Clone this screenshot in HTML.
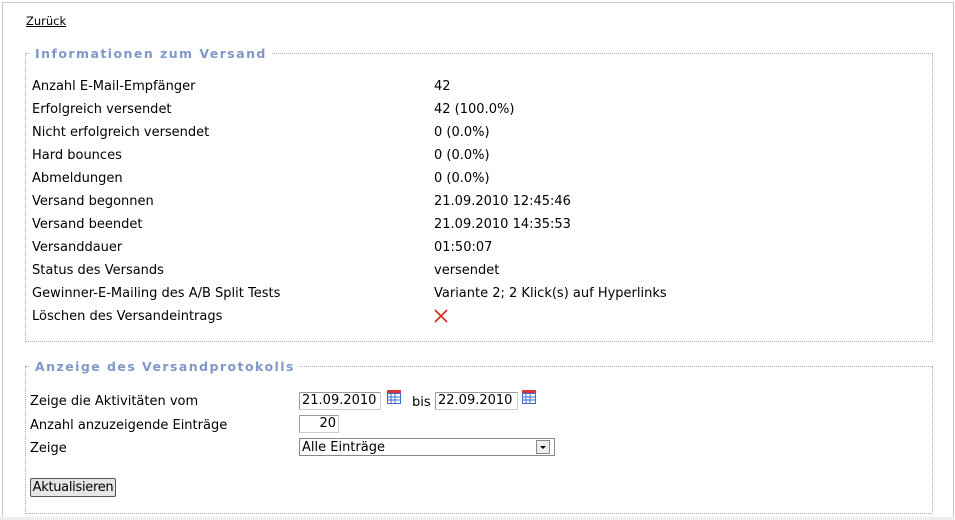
<!DOCTYPE html>
<html><head><meta charset="utf-8"><style>
body{margin:0;width:955px;height:520px;background:#fff;font-family:"DejaVu Sans","Liberation Sans",sans-serif;font-size:13px;color:#000;overflow:hidden;position:relative}
.frame{position:absolute;left:2px;top:2px;width:950px;height:514px;border:1px solid #c8c8c8;border-bottom:none}
.bot{position:absolute;left:0;top:517px;width:955px;height:3px;background:#eee}
a{position:absolute;left:26px;top:14px;color:#000;font-size:11.5px;text-decoration:underline}
.fs{position:absolute;border:1px dotted #aaa}
.lg{position:absolute;background:#fff;padding:0 5px;color:#7f98c9;font-weight:bold;font-size:12.5px;letter-spacing:1.45px}
.t{position:absolute;white-space:nowrap;margin-top:1px}
.in{position:absolute;border:1px solid #ccc;border-top-color:#999;border-left-color:#999;height:16px;line-height:16px;font-size:13px;padding:0 2px;background:#fff}
</style></head><body>
<div class="frame"></div><div class="bot"></div>
<a>Zurück</a>
<div class="fs" style="left:25px;top:53px;width:906px;height:287px"></div>
<div class="lg" style="left:30px;top:46px">Informationen zum Versand</div>
<div class="t" style="left:32px;top:78px">Anzahl E-Mail-Empfänger</div><div class="t" style="left:434px;top:78px">42</div>
<div class="t" style="left:32px;top:101px">Erfolgreich versendet</div><div class="t" style="left:434px;top:101px">42 (100.0%)</div>
<div class="t" style="left:32px;top:124px">Nicht erfolgreich versendet</div><div class="t" style="left:434px;top:124px">0 (0.0%)</div>
<div class="t" style="left:32px;top:147px">Hard bounces</div><div class="t" style="left:434px;top:147px">0 (0.0%)</div>
<div class="t" style="left:32px;top:170px">Abmeldungen</div><div class="t" style="left:434px;top:170px">0 (0.0%)</div>
<div class="t" style="left:32px;top:193px">Versand begonnen</div><div class="t" style="left:434px;top:193px">21.09.2010 12:45:46</div>
<div class="t" style="left:32px;top:216px">Versand beendet</div><div class="t" style="left:434px;top:216px">21.09.2010 14:35:53</div>
<div class="t" style="left:32px;top:239px">Versanddauer</div><div class="t" style="left:434px;top:239px">01:50:07</div>
<div class="t" style="left:32px;top:262px">Status des Versands</div><div class="t" style="left:434px;top:262px">versendet</div>
<div class="t" style="left:32px;top:285px">Gewinner-E-Mailing des A/B Split Tests</div><div class="t" style="left:434px;top:285px">Variante 2; 2 Klick(s) auf Hyperlinks</div>
<div class="t" style="left:32px;top:308px">Löschen des Versandeintrags</div>
<svg style="position:absolute;left:433px;top:308px" width="16" height="16"><path d="M2 2L14 14M14 2L2 14" stroke="#d42a1a" stroke-width="1.6"/></svg>
<div class="fs" style="left:25px;top:366px;width:906px;height:146px"></div>
<div class="lg" style="left:30px;top:359px">Anzeige des Versandprotokolls</div>
<div class="t" style="left:30px;top:393px">Zeige die Aktivitäten vom</div>
<div class="in" style="left:299px;top:392px;width:76px">21.09.2010</div>
<svg style="position:absolute;left:386px;top:389px" width="16" height="16"><rect x="1" y="1" width="14" height="3" fill="#d33"/><rect x="1.5" y="4.5" width="13" height="10" fill="#fff" stroke="#3a6fd0"/><path d="M1 8H15M1 11H15M5 4V15M9 4V15" stroke="#3a6fd0"/></svg>
<div class="t" style="left:412px;top:394px">bis</div>
<div class="in" style="left:435px;top:392px;width:77px">22.09.2010</div>
<svg style="position:absolute;left:521px;top:389px" width="16" height="16"><rect x="1" y="1" width="14" height="3" fill="#d33"/><rect x="1.5" y="4.5" width="13" height="10" fill="#fff" stroke="#3a6fd0"/><path d="M1 8H15M1 11H15M5 4V15M9 4V15" stroke="#3a6fd0"/></svg>
<div class="t" style="left:30px;top:417px">Anzahl anzuzeigende Einträge</div>
<div class="in" style="left:299px;top:415px;width:34px;text-align:right">20</div>
<div class="t" style="left:30px;top:440px">Zeige</div>
<div class="in" style="left:299px;top:438px;width:250px;border-color:#888;line-height:18px">Alle Einträge</div>
<div style="position:absolute;left:536px;top:440px;width:14px;height:14px;background:#eee;border:1px solid #888;box-sizing:border-box"><div style="margin:5px auto 0;width:0;height:0;border-left:3px solid transparent;border-right:3px solid transparent;border-top:3px solid #000"></div></div>
<div style="position:absolute;left:30px;top:478px;width:84px;height:17px;border:1px solid #555;border-radius:2px;background:#e6e6e6;font-size:13px;line-height:18px;text-align:center;letter-spacing:-0.3px">Aktualisieren</div>
</body></html>
